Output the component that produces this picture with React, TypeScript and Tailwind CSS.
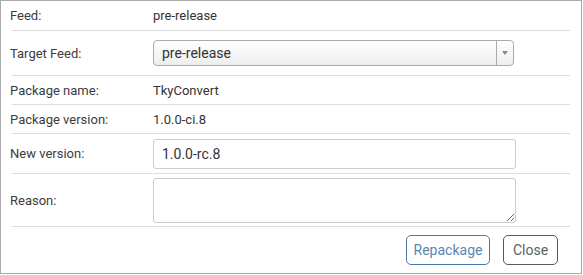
import React, { useState } from 'react';

const Row: React.FC<{ label: string; className: string; children: React.ReactNode }> = ({
  label,
  className,
  children,
}) => (
  <div className={`flex items-center border-b border-[#dddddd] ${className}`}>
    <div className="w-[141px] shrink-0 -ml-[2px] text-[#3c3c3c]">{label}</div>
    <div className="flex-1 flex items-center text-[#333]">{children}</div>
  </div>
);

export default function App() {
  const [target, setTarget] = useState('pre-release');
  const [version, setVersion] = useState('1.0.0-rc.8');
  const [reason, setReason] = useState('');

  return (
    <div
      className="w-[582px] h-[274px] border border-[#a9a9a9] bg-white text-[13px] leading-none"
      style={{ fontFamily: 'Roboto, "Liberation Sans", sans-serif' }}
    >
      <div className="mx-[11px]">
        <Row label="Feed:" className="h-[30px]">
          <span className="ml-[2px]">pre-release</span>
        </Row>

        <Row label="Target Feed:" className="h-[45px]">
          <div className="relative ml-[2px] w-[361px] h-[26px] rounded-[4px] border border-[#aaaaaa] bg-gradient-to-b from-white to-[#eeeeee] flex items-center">
            <span className="pl-[8px] text-[14px] text-[#333]">{target}</span>
            <div className="absolute right-0 top-0 h-full w-[17px] border-l border-[#aaaaaa] flex items-center justify-center">
              <svg width="6" height="4" viewBox="0 0 6 4">
                <path d="M0 0 L6 0 L3 4 Z" fill="#888888" />
              </svg>
            </div>
            <select
              value={target}
              onChange={(e) => setTarget(e.target.value)}
              className="absolute inset-0 opacity-0 cursor-pointer"
            >
              <option value="pre-release">pre-release</option>
              <option value="release">release</option>
            </select>
          </div>
        </Row>

        <Row label="Package name:" className="h-[29px]">
          <span className="ml-[2px]">TkyConvert</span>
        </Row>

        <Row label="Package version:" className="h-[29px]">
          <span className="ml-[2px]">1.0.0-ci.8</span>
        </Row>

        <Row label="New version:" className="h-[40px]">
          <input
            value={version}
            onChange={(e) => setVersion(e.target.value)}
            className="ml-[2px] w-[363px] h-[30px] rounded-[3px] border border-[#cccccc] px-[8px] text-[14px] text-[#333] outline-none"
          />
        </Row>

        <Row label="Reason:" className="h-[53px]">
          <textarea
            value={reason}
            onChange={(e) => setReason(e.target.value)}
            className="ml-[2px] w-[363px] h-[45px] rounded-[3px] border border-[#cccccc] px-[8px] py-[6px] text-[14px] outline-none block"
          />
        </Row>
      </div>

      <div className="flex justify-end gap-[13px] pt-[8px] pr-[23px]">
        <button className="w-[84px] h-[30px] rounded-[5px] border border-[#4a78a6] text-[#5a86b3] text-[14px] bg-white">
          Repackage
        </button>
        <button className="w-[55px] h-[30px] rounded-[5px] border border-[#555a60] text-[#5a5f66] text-[14px] bg-white">
          Close
        </button>
      </div>
    </div>
  );
}
